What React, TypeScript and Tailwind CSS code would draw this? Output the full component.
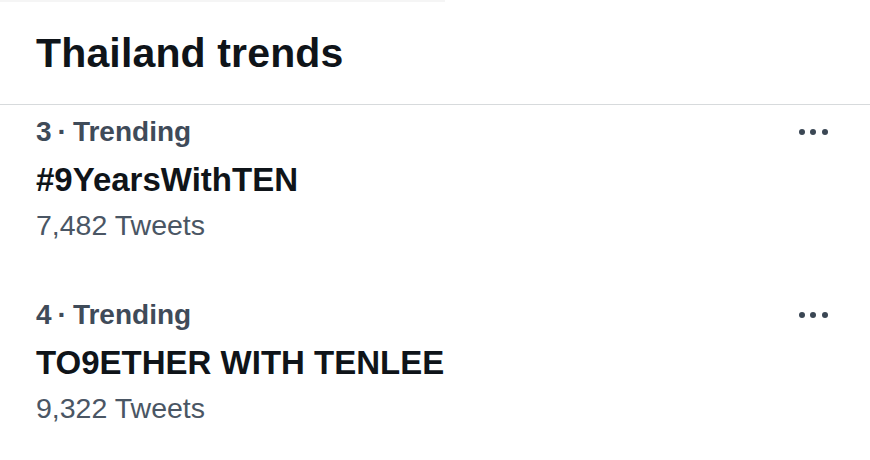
const trends = [
  { rank: 3, name: '#9YearsWithTEN', count: '7,482' },
  { rank: 4, name: 'TO9ETHER WITH TENLEE', count: '9,322' },
];

function MoreDots() {
  return (
    <div className="flex items-center gap-[5.7px]" aria-label="More">
      <span className="h-[6px] w-[6px] rounded-full bg-[#3b4754]" />
      <span className="h-[6px] w-[6px] rounded-full bg-[#3b4754]" />
      <span className="h-[6px] w-[6px] rounded-full bg-[#3b4754]" />
    </div>
  );
}

export default function App() {
  return (
    <div
      className="h-[460px] w-[870px] overflow-hidden bg-white text-[#0f1419]"
      style={{ fontFamily: '"Liberation Sans", Arial, sans-serif' }}
    >
      <div className="h-[2px] w-[445px] bg-[#f5f5f5]" />
      <div className="border-b border-[#d7dadc] pb-[27px] pl-[36px] pt-[27px]">
        <h2 className="text-[41px] font-bold leading-[48px] tracking-[0.15px]">Thailand trends</h2>
      </div>

      <div className="flex flex-col gap-[48px] pt-[5px]">
        {trends.map((trend) => (
          <div key={trend.rank} className="pl-[36px] pr-[42px]">
            <div className="flex h-[44px] items-center justify-between">
              <span className="text-[28px] font-bold leading-[44px] text-[#3f4b59]">
                {trend.rank}
                <span className="px-[6px]">·</span>
                Trending
              </span>
              <MoreDots />
            </div>
            <p className="mt-[3px] text-[33px] font-bold leading-[46px]">{trend.name}</p>
            <p className="mt-[2px] text-[28.5px] leading-[40px] text-[#4a5664]">{trend.count} Tweets</p>
          </div>
        ))}
      </div>
    </div>
  );
}
